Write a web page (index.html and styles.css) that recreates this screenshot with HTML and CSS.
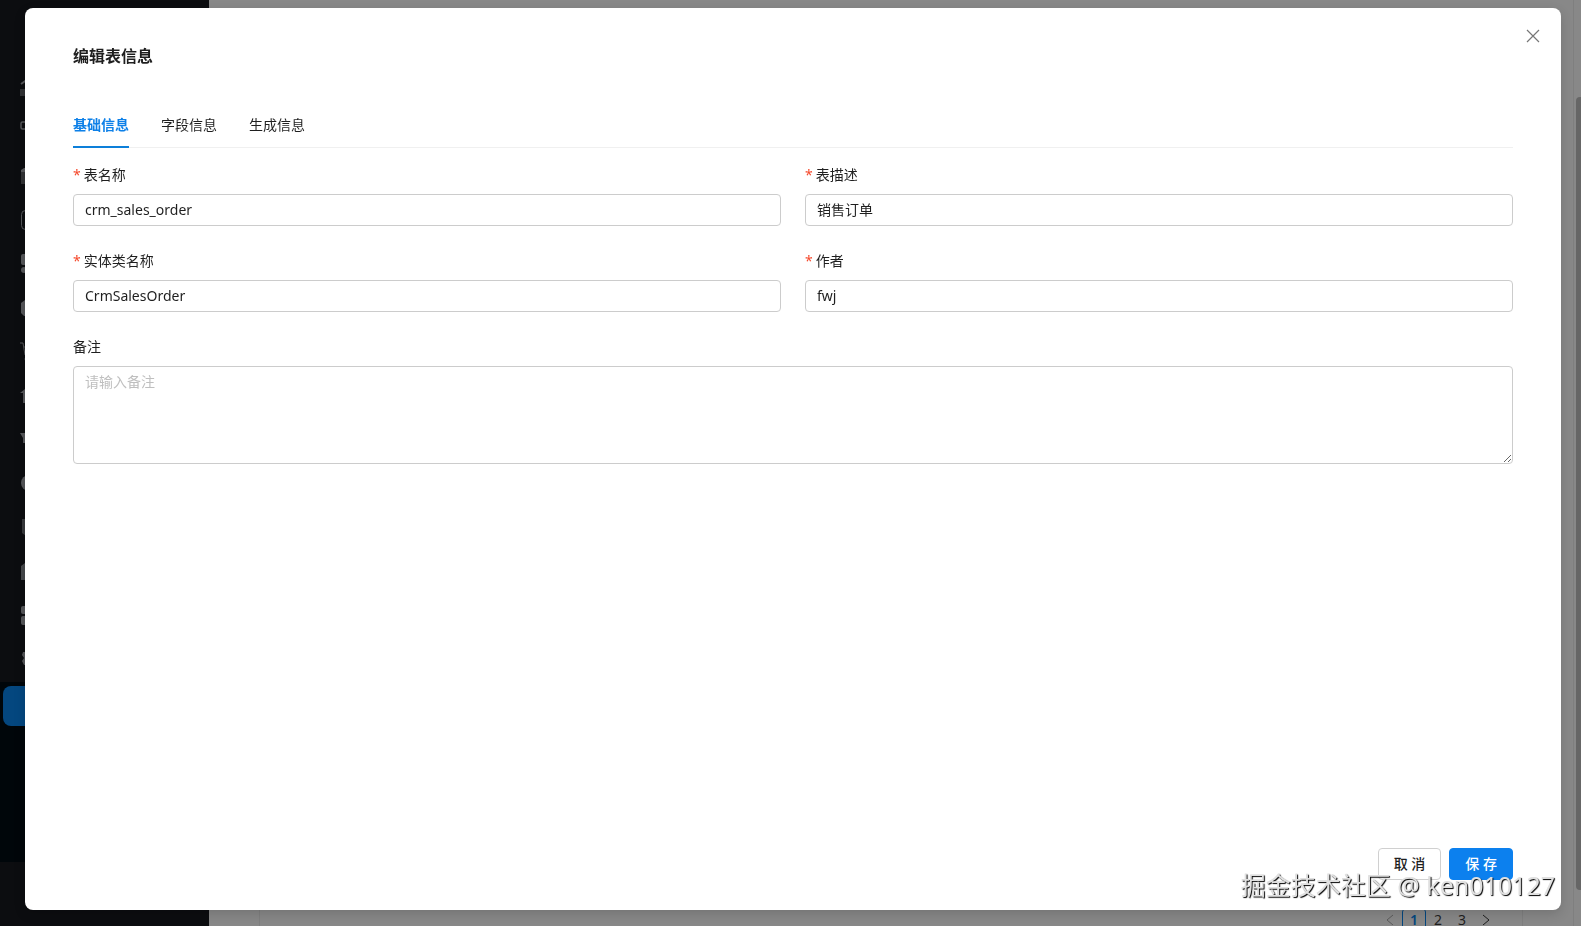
FILE: index.html
```html
<!DOCTYPE html>
<html lang="zh-CN">
<head>
  <meta charset="UTF-8">
  <meta name="viewport" content="width=device-width, initial-scale=1.0">
  <title>编辑表信息</title>
  <link rel="stylesheet" href="styles.css">
</head>
<body>
  <div class="page">
    <aside class="sidebar">
      <ul class="menu">
        <li><svg viewBox="0 0 18 20"><path d="M1 6 8 1l8 5" fill="none" stroke="currentColor" stroke-width="2"/><path d="M0 11h18v7H0z" opacity=".5"/></svg></li>
        <li class="raised"><svg viewBox="0 0 18 20"><rect x="1" y="6" width="16" height="7" rx="1.5" fill="none" stroke="currentColor" stroke-width="1.5"/></svg></li>
        <li><svg viewBox="0 0 18 20"><path d="M1 5v13h16V5z" opacity=".5"/><path d="M1 4 4 2h10l3 2v2H1z"/></svg></li>
        <li><svg viewBox="0 0 18 20"><rect x="1.5" y=".5" width="15" height="19" rx="4" fill="none" stroke="currentColor"/></svg></li>
        <li><svg viewBox="0 0 18 20"><rect x="1" width="16" height="11" rx="2"/><circle cx="4" cy="16" r="3"/><circle cx="13" cy="16" r="3"/></svg></li>
        <li><svg viewBox="0 0 18 20"><path d="M1 5 5 2h8l4 3v10l-3 3H4l-3-3z"/></svg></li>
        <li><svg viewBox="0 0 18 20"><path d="M0 1h3l2 12h10l2-8H4" fill="none" stroke="currentColor"/><circle cx="6" cy="17" r="1.5"/><circle cx="14" cy="17" r="1.5"/></svg></li>
        <li><svg viewBox="0 0 18 20"><path d="M0 7 5 3h8l5 4h-3v10H3V7z"/></svg></li>
        <li><svg viewBox="0 0 18 20"><path d="M0 3h18l-6 7v7l-6-4H3V8z"/></svg></li>
        <li><svg viewBox="0 0 18 20"><circle cx="9" cy="9" r="8"/></svg></li>
        <li><svg viewBox="0 0 18 20"><path d="M2 1h14v17H6l-4-3z" opacity=".6"/></svg></li>
        <li><svg viewBox="0 0 18 20"><path d="M1 4 5 1h8l4 3v14H1z" opacity=".8"/></svg></li>
        <li><svg viewBox="0 0 18 20"><rect x="1" width="7" height="8" rx="2"/><rect x="10" width="7" height="8" rx="2"/><rect x="1" y="10" width="7" height="9" rx="2"/><rect x="10" y="10" width="7" height="9" rx="2"/></svg></li>
        <li><svg viewBox="0 0 18 20"><path d="M3 2h12l1 4-2 2 2 2-1 5H4l-2-4 2-3-2-3z"/></svg></li>
      </ul>
      <div class="submenu"><div class="submenu-active"></div></div>
    </aside>
    <main class="content">
      <div class="card">
        <nav class="pager" aria-label="分页">
          <button type="button" class="pager-item disabled" aria-label="上一页"><svg viewBox="0 0 12 12"><path d="M9 2 3 7l6 5"/></svg></button>
          <button type="button" class="pager-item current">1</button>
          <button type="button" class="pager-item">2</button>
          <button type="button" class="pager-item">3</button>
          <button type="button" class="pager-item" aria-label="下一页"><svg viewBox="0 0 12 12"><path d="m3 2 6 5-6 5"/></svg></button>
        </nav>
      </div>
      <div class="scrollbar"><div class="thumb"></div></div>
    </main>
  </div>

  <div class="mask">
    <form class="modal" role="dialog" aria-labelledby="modal-title">
      <button type="button" class="close" aria-label="关闭">
        <svg viewBox="0 0 12 12"><path d="m0 0 12 12M12 0 0 12"/></svg>
      </button>
      <h1 class="title" id="modal-title">编辑表信息</h1>

      <div class="tabs" role="tablist">
        <button type="button" class="tab active" role="tab" aria-selected="true">基础信息</button>
        <button type="button" class="tab" role="tab">字段信息</button>
        <button type="button" class="tab" role="tab">生成信息</button>
      </div>

      <div class="fields">
        <div class="field">
          <label class="required" for="tableName">表名称</label>
          <input type="text" id="tableName" value="crm_sales_order">
        </div>
        <div class="field">
          <label class="required" for="tableComment">表描述</label>
          <input type="text" id="tableComment" value="销售订单">
        </div>
        <div class="field">
          <label class="required" for="className">实体类名称</label>
          <input type="text" id="className" value="CrmSalesOrder">
        </div>
        <div class="field">
          <label class="required" for="author">作者</label>
          <input type="text" id="author" value="fwj">
        </div>
        <div class="field wide">
          <label for="remark">备注</label>
          <textarea id="remark" rows="4" placeholder="请输入备注"></textarea>
        </div>
      </div>

      <div class="actions">
        <button type="button" class="btn">取 消</button>
        <button type="submit" class="btn primary">保 存</button>
      </div>
    </form>
  </div>

  <div class="watermark">掘金技术社区 @ ken010127</div>
</body>
</html>
```

FILE: styles.css
```css
* {
  box-sizing: border-box;
}

body {
  margin: 0;
  height: 100vh;
  overflow: hidden;
  font-family: "Noto Sans", "Noto Sans CJK SC", sans-serif;
  font-size: 14px;
  line-height: 22px;
  color: #1f1f1f;
}

button,
input,
textarea {
  font: inherit;
  color: inherit;
}

button {
  padding: 0;
  border: 0;
  background: none;
}

/* page behind the dialog */
.page {
  display: flex;
  height: 100%;
  background: #888;
}

.sidebar {
  flex: 0 0 209px;
  background: #0c0d10;
}

.menu {
  list-style: none;
  margin: 0;
  padding: 66px 20px 0;
  color: #55575a;
}

.menu li {
  display: flex;
  align-items: center;
  height: 44px;
}

.menu .raised {
  padding-bottom: 12px;
}

.menu svg {
  width: 18px;
  height: 20px;
  fill: currentColor;
}

.submenu {
  height: 180px;
  padding: 4px 3px;
  background: #00060a;
}

.submenu-active {
  height: 40px;
  border-radius: 8px;
  background: #04477f;
}

.content {
  flex: 1;
  display: flex;
  justify-content: space-between;
  padding-left: 50px;
}

.card {
  flex: 1;
  display: flex;
  align-items: flex-end;
  justify-content: flex-end;
  margin: 16px 50px 0 0;
  padding-right: 24px;
  border: solid #7f7f7f;
  border-width: 0 1px;
}

.pager {
  display: flex;
  margin-bottom: -6px;
}

.pager-item {
  width: 24px;
  height: 24px;
}

.pager-item svg {
  width: 12px;
  height: 12px;
  fill: none;
  stroke: currentColor;
}

.pager-item.disabled {
  color: #5c5c5c;
}

.pager-item.current {
  border: 1px solid #04477f;
  border-radius: 4px;
  color: #04477f;
  font-weight: 600;
}

.scrollbar {
  width: 8px;
  padding: 97px 0 36px 2px;
  border-left: 1px solid #7f7f7f;
}

.thumb {
  height: 100%;
  border-radius: 4px 0 0 4px;
  background: #666;
}

/* dialog */
.mask {
  position: fixed;
  inset: 0;
  display: flex;
  padding: 8px 20px 16px 25px;
}

.modal {
  position: relative;
  flex: 1;
  display: flex;
  flex-direction: column;
  padding: 36px 48px 30px;
  border-radius: 8px;
  background: #fff;
  box-shadow: 0 4px 12px rgba(0, 0, 0, 0.15);
}

.close {
  position: absolute;
  top: 17px;
  right: 17px;
  display: flex;
  align-items: center;
  justify-content: center;
  width: 22px;
  height: 22px;
}

.close svg {
  width: 12px;
  height: 12px;
  overflow: visible;
  fill: none;
  stroke: #777;
  stroke-width: 1.2;
}

.title {
  margin: 0;
  font-size: 16px;
  line-height: 24px;
  font-weight: 700;
}

.tabs {
  display: flex;
  gap: 32px;
  margin-top: 34px;
  border-bottom: 1px solid #f0f0f0;
}

.tab {
  height: 46px;
  margin-bottom: -1px;
  padding-top: 2px;
  border-bottom: 2px solid transparent;
}

.tab.active {
  border-color: #0d7fd9;
  color: #0d80e8;
  font-weight: 700;
}

.fields {
  display: grid;
  grid-template-columns: 1fr 1fr;
  gap: 24px;
  margin-top: 16px;
}

.field {
  display: flex;
  flex-direction: column;
  gap: 8px;
}

.wide {
  grid-column: 1 / -1;
}

.required::before {
  content: "*";
  margin-right: 3px;
  color: #f5492c;
}

input,
textarea {
  width: 100%;
  padding: 4px 11px;
  border: 1px solid #ccc;
  border-radius: 4px;
  background: #fff;
}

input {
  height: 32px;
  padding: 3px 11px 5px;
}

textarea {
  display: block;
  resize: vertical;
}

textarea::placeholder {
  color: #bfbfbf;
}

.actions {
  display: flex;
  justify-content: flex-end;
  gap: 8px;
  margin-top: auto;
}

.btn {
  height: 32px;
  padding: 0 15px;
  border: 1px solid #d0d0d0;
  border-radius: 4px;
  background: #fff;
  font-weight: 500;
}

.btn.primary {
  border-color: #0c80ee;
  background: #0c80ee;
  color: #fff;
}

.watermark {
  position: fixed;
  right: 26px;
  bottom: 23px;
  font-size: 25px;
  line-height: 36px;
  color: #e0e0e0;
  text-shadow: 1px 1px 1px #000;
}
```
